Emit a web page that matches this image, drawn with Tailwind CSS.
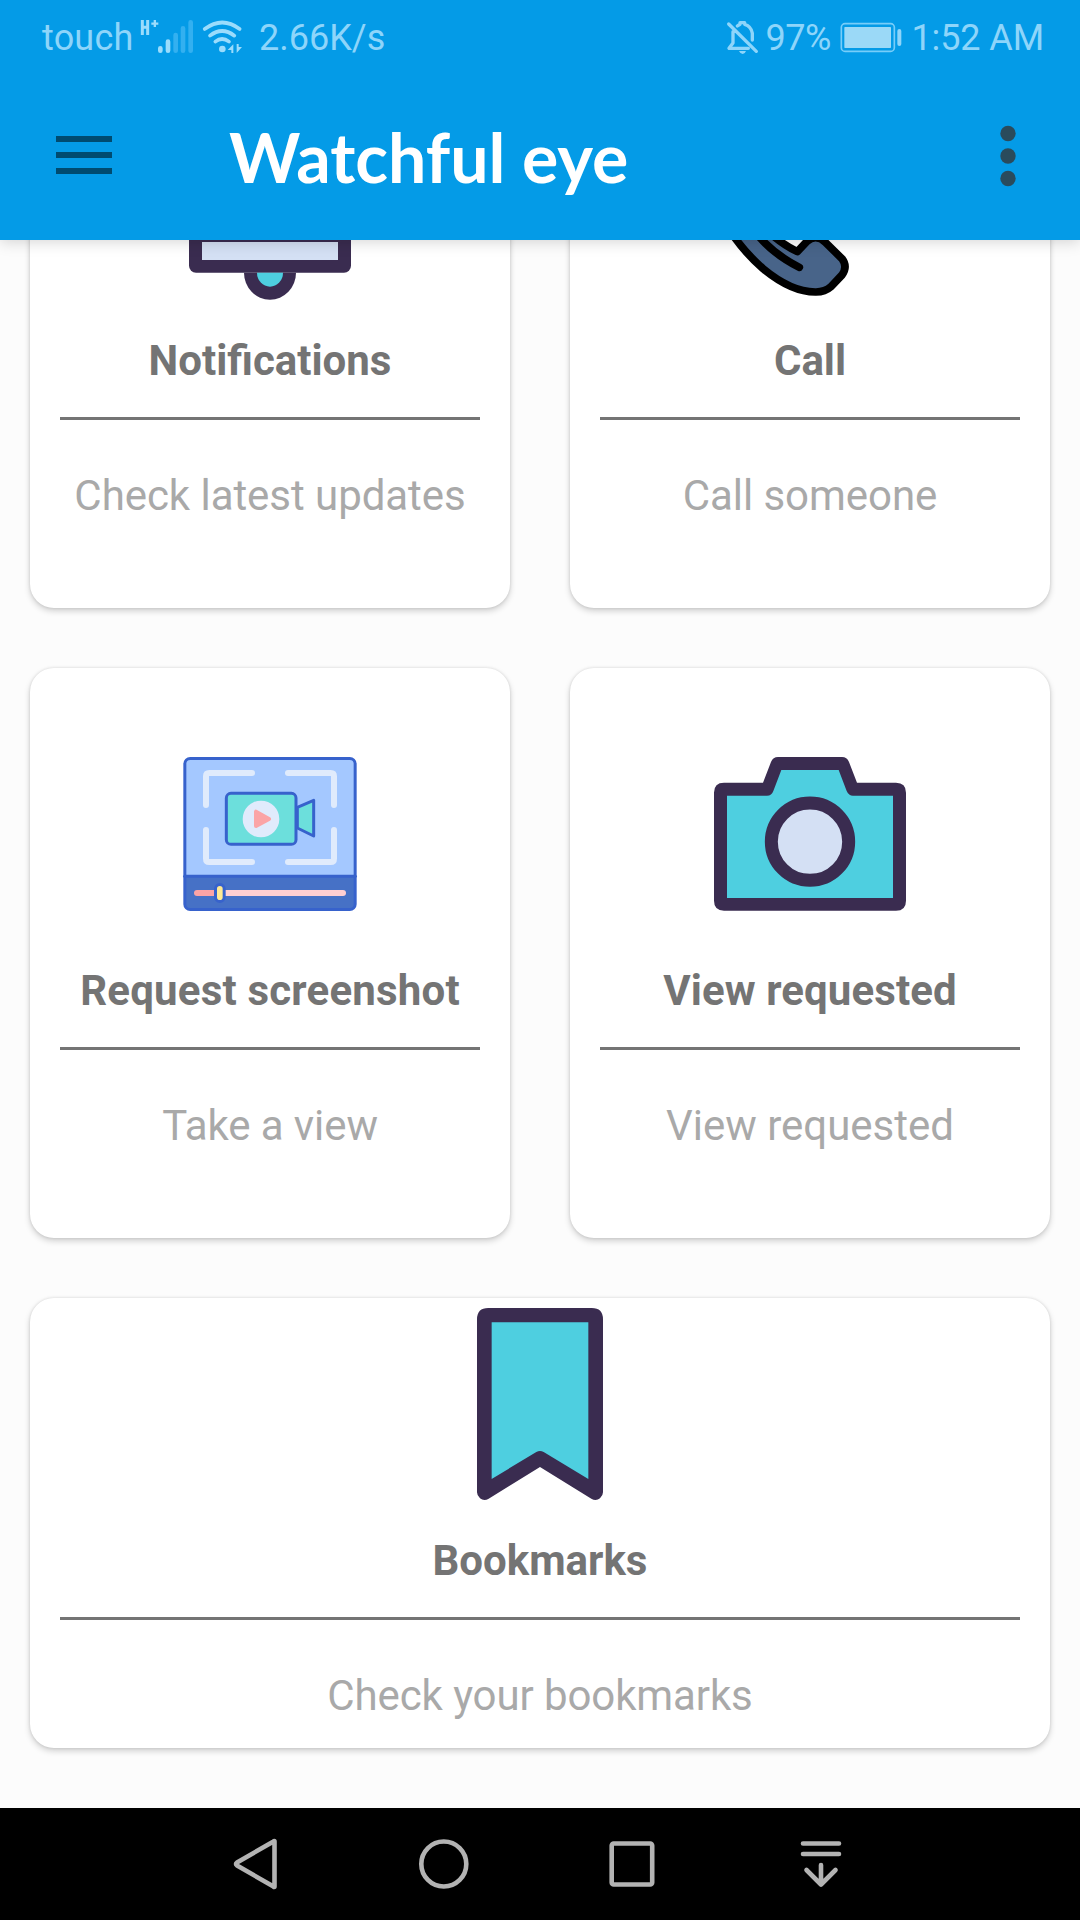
<!DOCTYPE html>
<html lang="en">
<head>
<meta charset="utf-8">
<title>Watchful eye</title>
<script src="https://cdn.jsdelivr.net/npm/@tailwindcss/browser@4"></script>
</head>
<body class="w-[1080px] h-[1920px] overflow-hidden bg-[#fcfcfc] font-['Roboto',sans-serif] flex flex-col">
<header class="relative z-10 h-[240px] shrink-0 bg-[#049be7] shadow-[0_2px_14px_rgba(0,0,0,0.17)]">
  <div class="h-[76px] flex items-center pl-[42px] pr-[36px] text-[36px] leading-[42px] text-[#8ed5fa] whitespace-nowrap">
    <span class="w-[92px] tracking-[0.2px]">touch</span>
    <svg class="w-[110px] h-[75px] ml-[4px] shrink-0" viewBox="414 0 330 225">
      <g fill="none" stroke="#9bdcfc" stroke-width="9"><path d="M427 57v45M443 57v45M426 79h17"/><path stroke-width="7" d="M454 68h21M464.500 57v21"/></g>
      <g stroke-width="14" stroke-linecap="round"><path stroke="#9bdcfc" d="M481 142v7M504 122v27"/><path stroke="#33b0f0" d="M527 102v47M549 82v67M572 64v85"/></g>
      <g fill="none" stroke="#9bdcfc" stroke-width="11" stroke-linecap="round"><path d="M614 84q53-39 105 0M630 104q36-28 73 0M646 122q20-16 41 0"/></g>
      <circle cx="667" cy="144" r="10" fill="#9bdcfc"/><path fill="#9bdcfc" d="M683 147l17-17v26h-6v-9zM726 138l-16 18v-27h6v9z"/>
    </svg>
    <span class="ml-[11px]">2.66K/s</span>
    <svg class="w-[34px] h-[75px] ml-auto shrink-0" viewBox="78 0 102 225">
      <g fill="none" stroke="#8ed5fa" stroke-width="10" stroke-linecap="round" stroke-linejoin="round"><path d="M86 69l83 82M112 75q5-4 8-5v-5h14v5q20 6 23 27v20M99 92v34l-12 16h58"/></g><path fill="#8ed5fa" d="M117 150h21q-3 9-10 9t-11-9z"/>
    </svg>
    <span class="ml-[5px] w-[66px] tracking-[-0.4px]">97%</span>
    <svg class="w-[64px] h-[75px] ml-[8px] shrink-0" viewBox="417 0 192 225">
      <rect x="424" y="68" width="159" height="83" rx="11" fill="none" stroke="#77cdf9" stroke-width="5"/><rect x="433" y="78" width="140" height="63" rx="2" fill="#9bd9f7"/><rect x="592" y="84" width="12" height="51" rx="6" fill="#8ed5fa"/>
    </svg>
    <span class="ml-[8px] tracking-[-0.1px]">1:52 AM</span>
  </div>
  <div class="h-[160px] flex items-center pl-[56px] pr-[64px]">
    <svg class="w-[56px] h-[38px] mb-[2px]" viewBox="0 0 56 38" fill="#004b70"><path d="M0 0h56v6H0zM0 16h56v6H0zM0 32h56v6H0z"/></svg>
    <h1 class="mt-[2px] ml-[117px] font-['Lato',sans-serif] font-bold text-[68px] leading-[82px] text-white whitespace-nowrap">Watchful eye</h1>
    <svg class="w-[16px] h-[62px] ml-auto" viewBox="0 0 16 62" fill="#2a4b5c"><circle cx="8" cy="8.500" r="7.700"/><circle cx="8" cy="31" r="7.700"/><circle cx="8" cy="53.500" r="7.700"/></svg>
  </div>
</header>

<main class="flex-1 min-h-0 overflow-hidden">
  <div class="-mt-[202px] px-[30px] grid grid-cols-2 gap-[60px] text-center text-[42px] leading-[49px] whitespace-nowrap">
    <section class="h-[570px] rounded-[24px] bg-white px-[30px] pt-[70px] shadow-[0_3px_6px_rgba(0,0,0,0.18),0_0_3px_rgba(0,0,0,0.12)]">
      <svg class="w-[192px] h-[192px] mx-auto" viewBox="0 0 192 192">
        <rect x="15" y="104" width="162" height="60.700" rx="7" fill="#3a2c50"/><rect x="28" y="134" width="136" height="18" fill="#d4e0f4"/>
        <path d="M70 164.700a26 27 0 0 0 52 0z" fill="#3a2c50"/><path d="M83 164.700a13 14 0 0 0 26 0z" fill="#4ecfe0"/>
      </svg>
      <h2 class="mt-[36px] font-bold text-[#747474]">Notifications</h2>
      <div class="mt-[32px] h-[3px] bg-[#747474]"></div>
      <p class="mt-[51px] text-[#a9a9a9] tracking-[-0.05px]">Check latest updates</p>
    </section>
    <section class="h-[570px] rounded-[24px] bg-white px-[30px] pt-[70px] shadow-[0_3px_6px_rgba(0,0,0,0.18),0_0_3px_rgba(0,0,0,0.12)]">
      <svg class="w-[192px] h-[192px] mx-auto" viewBox="0 0 192 192">
        <g transform="translate(-34 117) scale(.33333)" stroke="#000" stroke-linecap="round" stroke-linejoin="round">
          <path fill="#486489" stroke-width="23" d="M118-40Q164 56 249 131Q335 202 408 201Q435 201 453 185L486 150Q504 125 486 101L436 52Q408 25 381 49L352 80Q300 55 255 10L210-50z"/>
          <path fill="none" stroke-width="23" d="M225 20Q276 86 358 127"/>
        </g>
      </svg>
      <h2 class="mt-[36px] font-bold text-[#747474]">Call</h2>
      <div class="mt-[32px] h-[3px] bg-[#747474]"></div>
      <p class="mt-[51px] text-[#a9a9a9] tracking-[-0.05px]">Call someone</p>
    </section>
    <section class="h-[570px] rounded-[24px] bg-white px-[30px] pt-[70px] shadow-[0_3px_6px_rgba(0,0,0,0.18),0_0_3px_rgba(0,0,0,0.12)]">
      <svg class="w-[192px] h-[192px] mx-auto" viewBox="0 0 192 192">
        <g transform="translate(-4 2) scale(.33333)" stroke-linecap="round" stroke-linejoin="round">
          <rect x="44.500" y="55.500" width="511" height="453" rx="16" fill="#a4c8ff"/>
          <path d="M44 409h512v84q0 16-16 16H60q-16 0-16-16z" fill="#4671c6"/>
          <g fill="none" stroke="#3762cc" stroke-width="9"><rect x="44.500" y="55.500" width="511" height="453" rx="16"/><path d="M44 409h512"/></g>
          <path fill="none" stroke="#e0ebfc" stroke-width="18" d="M246 99H118q-10 0-10 10v86M354 99h128q10 0 10 10v86M108 270v86q0 10 10 10h128M492 270v86q0 10-10 10H354"/>
          <g fill="#6cdfdc" stroke="#3762cc" stroke-width="9"><path d="M382 202l49-21v107l-49-24z"/><rect x="169" y="160" width="209" height="153" rx="14"/></g>
          <circle cx="273" cy="237" r="55" fill="#e0ebfc"/><path d="M258 215v43l39-21z" fill="#fba4a6" stroke="#fba4a6" stroke-width="12"/>
          <path stroke="#ffcfd2" stroke-width="18" d="M160 459h359"/><path stroke="#fba4a6" stroke-width="18" d="M81 459h55"/>
          <rect x="136.500" y="433.500" width="26" height="51" rx="13" fill="#ffea94" stroke="#3762cc" stroke-width="9"/>
        </g>
      </svg>
      <h2 class="mt-[36px] font-bold text-[#747474] tracking-[0.2px]">Request screenshot</h2>
      <div class="mt-[32px] h-[3px] bg-[#747474]"></div>
      <p class="mt-[51px] text-[#a9a9a9] tracking-[-0.1px]">Take a view</p>
    </section>
    <section class="h-[570px] rounded-[24px] bg-white px-[30px] pt-[70px] shadow-[0_3px_6px_rgba(0,0,0,0.18),0_0_3px_rgba(0,0,0,0.12)]">
      <svg class="w-[192px] h-[192px] mx-auto" viewBox="0 0 192 192">
        <g transform="translate(-14 2) scale(.33333)">
          <path fill="#3a2c50" d="M72 128H189L213 66Q219 51 234 51H426Q441 51 447 66L471 128H588Q618 128 618 158V482Q618 512 588 512H72Q42 512 42 482V158Q42 128 72 128z"/>
          <path fill="#4ecfe0" d="M81 167H201Q215 167 220 153L244 90H416L440 153Q446 167 459 167H579V474H81z"/>
          <circle cx="330" cy="305" r="116" fill="#d4e0f4" stroke="#3a2c50" stroke-width="39"/>
        </g>
      </svg>
      <h2 class="mt-[36px] font-bold text-[#747474] tracking-[0.1px]">View requested</h2>
      <div class="mt-[32px] h-[3px] bg-[#747474]"></div>
      <p class="mt-[51px] text-[#a9a9a9]">View requested</p>
    </section>
    <section class="col-span-2 h-[450px] rounded-[24px] bg-white px-[30px] pt-[10px] shadow-[0_3px_6px_rgba(0,0,0,0.18),0_0_3px_rgba(0,0,0,0.12)]">
      <svg class="w-[192px] h-[192px] mx-auto" viewBox="0 0 192 192">
        <g transform="translate(16 -18) scale(.33333)">
          <path fill="#3a2c50" d="M85 54H395Q429 54 429 88V607Q429 617 420 625Q408 634 394 626L240 531L86 626Q72 634 60 625Q51 617 51 607V88Q51 54 85 54z"/>
          <path fill="#4ecfe0" d="M95 97H385V567L251 486Q240 480 229 486L95 567z"/>
        </g>
      </svg>
      <h2 class="mt-[36px] font-bold text-[#747474]">Bookmarks</h2>
      <div class="mt-[32px] h-[3px] bg-[#747474]"></div>
      <p class="mt-[51px] text-[#a9a9a9] tracking-[-0.1px]">Check your bookmarks</p>
    </section>
  </div>
</main>

<nav class="h-[112px] shrink-0 bg-black flex items-center justify-between pl-[226px] pr-[229px]">
  <svg class="w-[60px] h-[60px]" viewBox="226 1834 60 60" fill="none" stroke="#b3b3b3" stroke-width="4.600" stroke-linejoin="round"><path d="M274.500 1841.500v45q0 1-1 0L237 1865.500q-2-1.500 0-3L273.500 1841.500q1-1 1 0z"/></svg>
  <svg class="w-[60px] h-[60px]" viewBox="414 1834 60 60" fill="none" stroke="#b3b3b3" stroke-width="4.600"><circle cx="443.800" cy="1864" r="22.500"/></svg>
  <svg class="w-[60px] h-[60px]" viewBox="603 1834 60 60" fill="none" stroke="#b3b3b3" stroke-width="4.600"><rect x="611.700" y="1843.500" width="40.500" height="41" rx="2"/></svg>
  <svg class="w-[60px] h-[60px]" viewBox="791 1834 60 60" fill="none" stroke="#b3b3b3" stroke-width="4.600" stroke-linecap="round" stroke-linejoin="round"><path d="M803 1843.500h36M803 1854h36M821 1865v19M806.500 1870l14.500 14.500 14.500-14.500"/></svg>
</nav>
</body>
</html>
